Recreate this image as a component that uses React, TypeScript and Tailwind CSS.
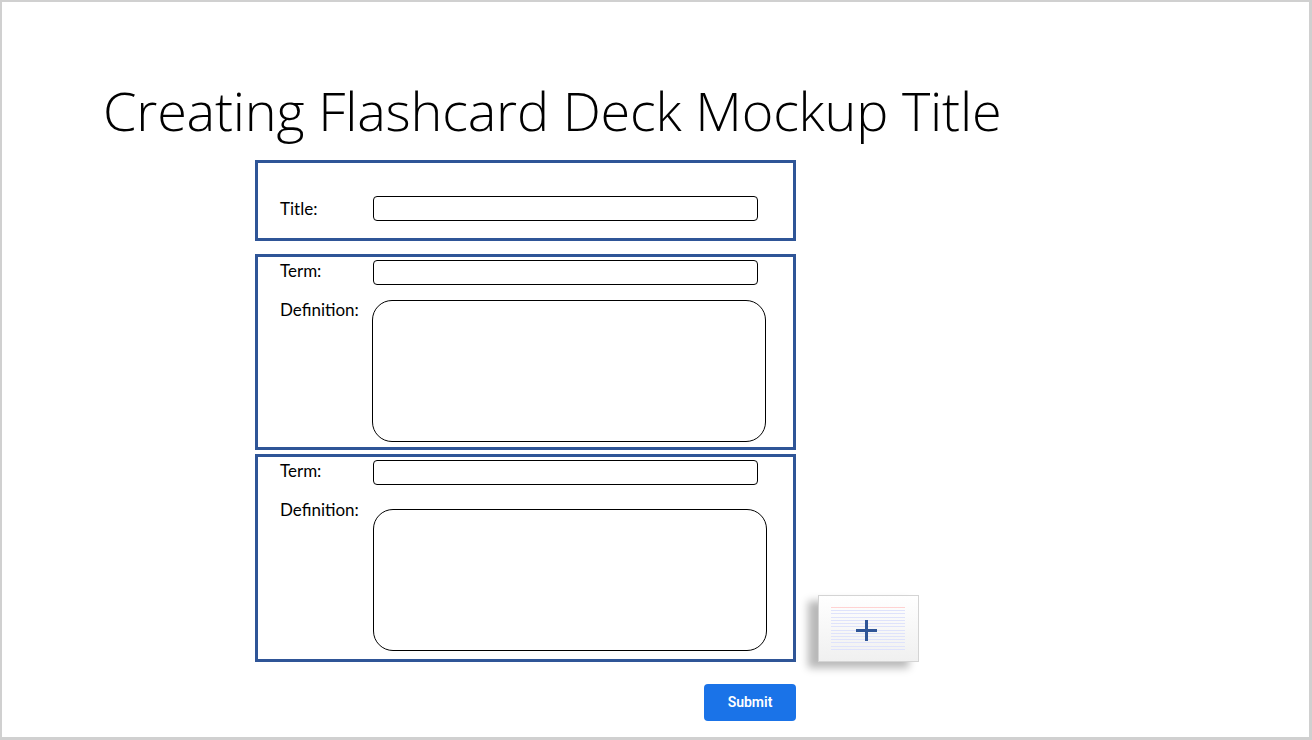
import React from "react";

function Field({ label, labelClass = "" }: { label: string; labelClass?: string }) {
    return (
        <div className="flex items-center">
            <span className={`w-[93px] text-[17px] leading-[20px] text-black ${labelClass}`}>{label}</span>
            <div className="w-[385px] h-[25px] rounded-[4px] border border-black bg-white" />
        </div>
    );
}

function CardBlock({ areaTop, areaLeft, height }: { areaTop: string; areaLeft: string; height: string }) {
    return (
        <div className={`w-[541px] ${height} border-[3px] border-[#2f5597] pl-[22px] pt-[3px]`}>
            <Field label="Term:" labelClass="-mt-[4px]" />
            <div className="flex mt-[15px]">
                <span className="w-[93px] text-[17px] text-black leading-[20px]">Definition:</span>
                <div className={`${areaTop} ${areaLeft} w-[394px] h-[142px] rounded-[20px] border border-black bg-white`} />
            </div>
        </div>
    );
}

function AddCardButton() {
    return (
        <div className="w-[101px] h-[67px] border border-[#d4d4d4] bg-gradient-to-b from-white to-[#f0f0f0] shadow-[-10px_6px_8px_rgba(0,0,0,0.28)] flex items-center justify-center">
            <div className="relative w-[74px] h-[43px] -ml-[2px] flex flex-col justify-between">
                <div className="h-px bg-[#ffd2d2]" />
                {Array.from({ length: 13 }).map((_, i) => (
                    <div key={i} className="h-px bg-[#dfe3fb]" />
                ))}
                {/* plus */}
                <svg className="absolute left-[25px] top-[13px]" width="21" height="21" viewBox="0 0 21 21">
                    <rect x="0" y="9" width="21" height="3" fill="#2f5597" />
                    <rect x="9" y="0" width="3" height="21" fill="#2f5597" />
                </svg>
            </div>
        </div>
    );
}

export default function App() {
    return (
        <div className="w-[1312px] h-[740px] bg-white border-2 border-[#d0d0d0] border-r-[3px] border-b-[3px] font-['Lato','Liberation_Sans',sans-serif] text-black">
            {/* Titulo */}
            <h1 className="pl-[101px] pt-[73px] text-[54px] leading-[70px] font-light font-['Open_Sans','Lato',sans-serif] tracking-[-0.2px]">
                Creating Flashcard Deck Mockup Title
            </h1>
            <div className="ml-[253px] mt-[15px] flex flex-col">
                {/* Title box */}
                <div className="w-[541px] h-[81px] border-[3px] border-[#2f5597] pl-[22px] pt-[33px]">
                    <Field label="Title:" />
                </div>
                <div className="mt-[13px]">
                    <CardBlock areaTop="" areaLeft="-ml-px" height="h-[196px]" />
                </div>
                <div className="mt-[4px] flex items-end gap-[22px]">
                    <CardBlock areaTop="mt-[9px]" areaLeft="" height="h-[208px]" />
                    <AddCardButton />
                </div>
                <div className="w-[541px] flex justify-end mt-[22px]">
                    <button className="w-[92px] h-[37px] rounded-[4px] bg-[#1a73e8] text-white text-[14px] font-semibold font-['Roboto',sans-serif]">
                        Submit
                    </button>
                </div>
            </div>
        </div>
    );
}
